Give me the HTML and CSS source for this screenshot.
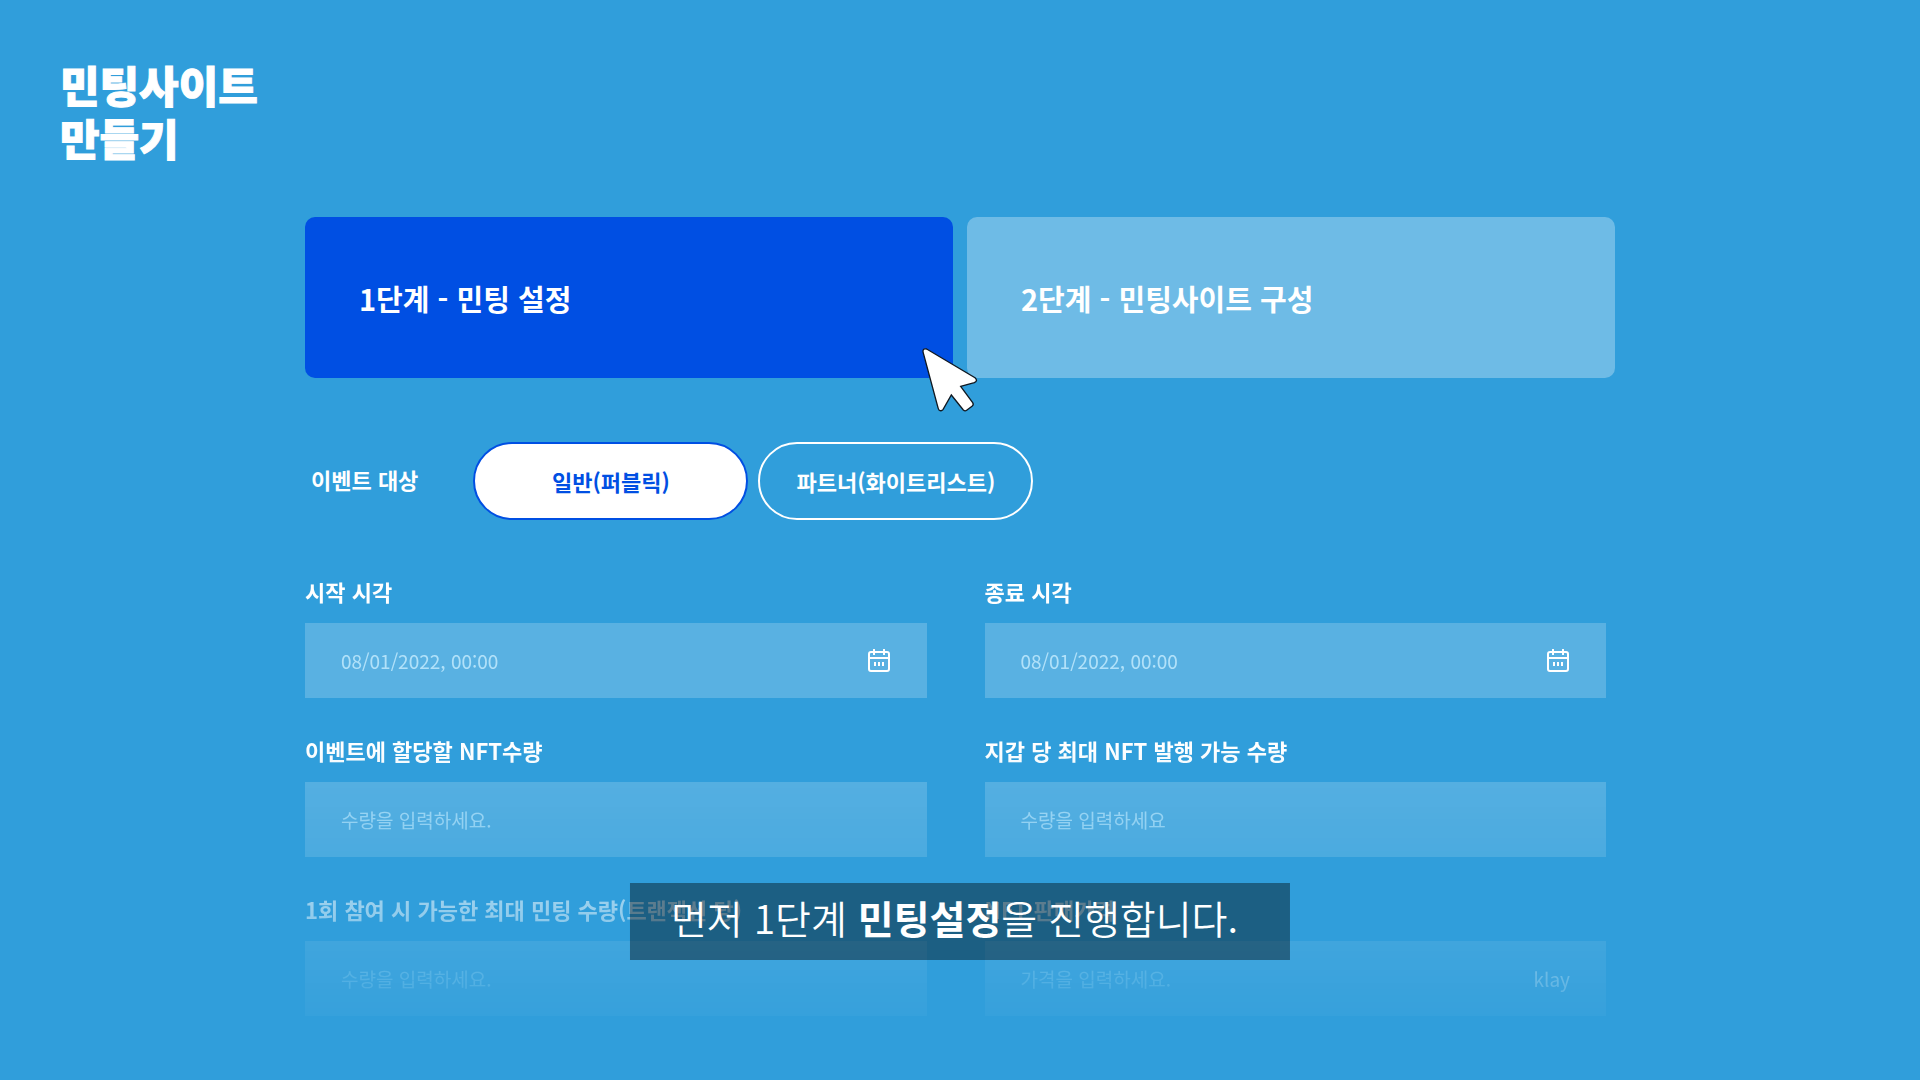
FILE: index.html
```html
<!DOCTYPE html>
<html lang="ko">
<head>
<meta charset="utf-8">
<meta name="viewport" content="width=device-width, initial-scale=1">
<title>민팅사이트 만들기</title>
<link rel="stylesheet" href="styles.css">
</head>
<body>
<header class="header">
  <h1 class="title">민팅사이트<br>만들기</h1>
</header>
<main class="content">
  <nav class="steps">
    <button class="step step-active" type="button">1단계 - 민팅 설정</button>
    <button class="step" type="button">2단계 - 민팅사이트 구성</button>
    <svg class="cursor" viewBox="60 45 180 210" aria-hidden="true">
      <path d="M69 66 Q68 54 80 57 L225 143 Q235 152 223 158 L182 169 L218 218 Q222 224 217 228 L200 241 Q195 245 190 240 L154 195 L129 239 Q124 245 117 240 Q115 237 114 233 Z"/>
    </svg>
  </nav>
  <div class="target" role="group" aria-labelledby="target-label">
    <span class="target-label" id="target-label">이벤트 대상</span>
    <div class="pills">
      <button class="pill pill-active" type="button">일반(퍼블릭)</button>
      <button class="pill" type="button">파트너(화이트리스트)</button>
    </div>
  </div>
  <form class="form">
    <div class="field">
      <label class="label" for="start">시작 시각</label>
      <div class="box">
        <input class="input" id="start" type="text" placeholder="08/01/2022, 00:00">
        <svg class="calendar" viewBox="0 0 24 26" aria-hidden="true"><rect x="2" y="4" width="20" height="19" rx="2"/><path d="M2 10H22M7 1v6M17 1v6M8 14v4M12 14v4M16 14v4"/></svg>
      </div>
    </div>
    <div class="field">
      <label class="label" for="end">종료 시각</label>
      <div class="box">
        <input class="input" id="end" type="text" placeholder="08/01/2022, 00:00">
        <svg class="calendar" viewBox="0 0 24 26" aria-hidden="true"><rect x="2" y="4" width="20" height="19" rx="2"/><path d="M2 10H22M7 1v6M17 1v6M8 14v4M12 14v4M16 14v4"/></svg>
      </div>
    </div>
    <div class="field">
      <label class="label" for="amount">이벤트에 할당할 NFT수량</label>
      <div class="box"><input class="input" id="amount" type="text" placeholder="수량을 입력하세요."></div>
    </div>
    <div class="field">
      <label class="label" for="wallet">지갑 당 최대 NFT 발행 가능 수량</label>
      <div class="box"><input class="input" id="wallet" type="text" placeholder="수량을 입력하세요"></div>
    </div>
    <div class="field">
      <label class="label" for="per-tx">1회 참여 시 가능한 최대 민팅 수량(트랜잭션 당)</label>
      <div class="box"><input class="input" id="per-tx" type="text" placeholder="수량을 입력하세요."></div>
    </div>
    <div class="field">
      <label class="label" for="price">NFT 판매가격</label>
      <div class="box"><input class="input" id="price" type="text" placeholder="가격을 입력하세요."><span class="unit">klay</span></div>
    </div>
  </form>
</main>
<p class="caption">먼저 1단계 <strong>민팅설정</strong>을 진행합니다.</p>
</body>
</html>
```
FILE: styles.css
```css
* { box-sizing: border-box; }

body {
  margin: 0;
  min-height: 100vh;
  position: relative;
  background: #309edb;
  color: #fff;
  font-family: "Noto Sans CJK KR", "Noto Sans", sans-serif;
}

button, input { font: inherit; color: inherit; }

.header { padding: 58px 60px 53px; }

.title {
  margin: 0;
  font-size: 43px;
  font-weight: 900;
  line-height: 53px;
  -webkit-text-stroke: 1px #fff;
}

.content {
  max-width: 1310px;
  margin: 0 auto;
}

.steps {
  position: relative;
  display: grid;
  grid-template-columns: 1fr 1fr;
  gap: 14px;
}

.step {
  height: 161px;
  padding: 0 54px;
  border: 0;
  border-radius: 10px;
  background: rgba(255, 255, 255, 0.3);
  font-size: 29px;
  font-weight: 700;
  text-align: left;
}

.step-active { background: #004fe3; }

.cursor {
  position: absolute;
  left: 615px;
  top: 128px;
  width: 60px;
  height: 70px;
  fill: #fff;
  stroke: #101820;
  stroke-width: 4;
}

.target {
  display: flex;
  align-items: center;
  gap: 55px;
  margin-top: 64px;
  padding-left: 6px;
}

.target-label {
  padding-bottom: 4px;
  font-size: 22px;
  font-weight: 700;
}

.pills { display: flex; gap: 10px; }

.pill {
  width: 275px;
  height: 78px;
  padding: 0;
  border: 2px solid #fff;
  border-radius: 39px;
  background: transparent;
  font-size: 22px;
  font-weight: 700;
}

.pill-active {
  border-color: #004fe3;
  background: #fff;
  color: #004fe3;
}

.form {
  display: grid;
  grid-template-columns: 1fr 1fr;
  gap: 38px 58px;
  margin-top: 57px;
  padding-right: 9px;
  mask-image: linear-gradient(#000 170px, rgba(0, 0, 0, 0.16));
}

.field {
  display: flex;
  flex-direction: column;
  gap: 18px;
}

.label {
  font-size: 22px;
  font-weight: 700;
  line-height: 28px;
}

.box {
  display: flex;
  align-items: center;
  height: 75px;
  padding: 0 36px;
  background: rgba(255, 255, 255, 0.2);
}

.input {
  flex: 1;
  min-width: 0;
  padding: 0;
  border: 0;
  outline: 0;
  background: transparent;
  font-size: 19px;
}

.input::placeholder { color: rgba(200, 238, 255, 0.8); }

.calendar {
  width: 24px;
  height: 26px;
  fill: none;
  stroke: #fff;
  stroke-width: 2;
}

.unit { font-size: 19px; }

.caption {
  position: absolute;
  left: 50%;
  top: 883px;
  transform: translateX(-50%);
  margin: 0;
  padding: 0 52px 8px 41px;
  background: rgba(0, 0, 0, 0.4);
  font-size: 39px;
  font-weight: 350;
  line-height: 69px;
  white-space: nowrap;
}

.caption strong { font-weight: 700; }
```
